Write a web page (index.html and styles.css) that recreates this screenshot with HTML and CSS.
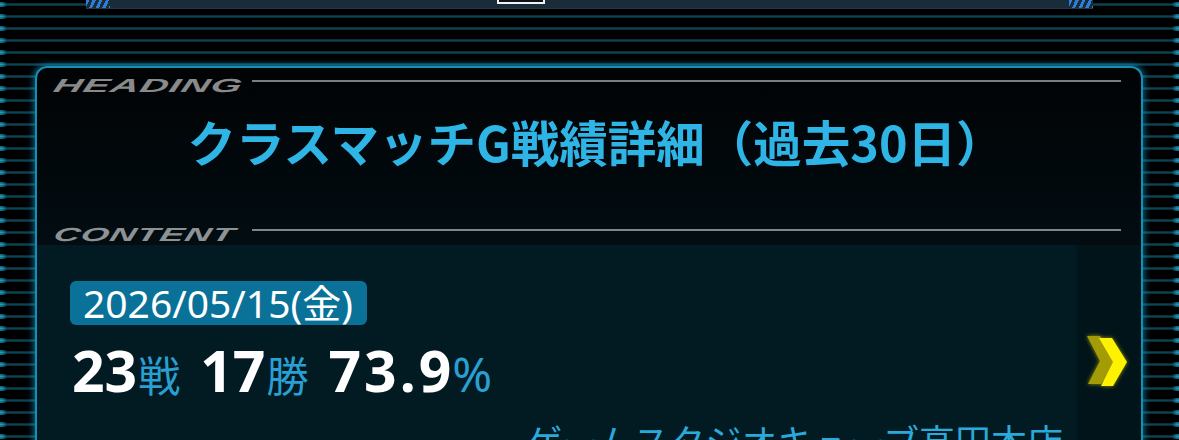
FILE: index.html
```html
<!DOCTYPE html>
<html lang="ja">
<head>
<meta charset="utf-8">
<title>クラスマッチG戦績詳細</title>
<link rel="stylesheet" href="styles.css">
</head>
<body>
<div class="page">
  <div class="topbar">
    <span class="deco"></span>
    <span class="btn-edge"></span>
    <span class="deco deco-r"></span>
  </div>
  <section class="panel">
    <div class="label-row">
      <span class="label label-heading">HEADING</span>
      <span class="rule"></span>
    </div>
    <h1 class="title">クラスマッチG戦績詳細（過去30日）</h1>
    <div class="label-row label-row-content">
      <span class="label label-content">CONTENT</span>
      <span class="rule"></span>
    </div>
    <div class="record">
      <div class="record-main">
        <span class="date">2026/05/15(金)</span>
        <div class="stats"><b class="num">23</b><span class="unit">戦</span><b class="num">17</b><span class="unit">勝</span><b class="num num-rate">73.9</b><span class="unit pct">%</span></div>
        <div class="shop">ゲームスタジオキューブ高田本店</div>
      </div>
      <div class="record-arrow">
        <svg class="chevron" width="46" height="52" viewBox="0 0 46 52">
          <polygon points="2,0 15,0 29,25 16,48 3,48 15,25" fill="#a49c06"/>
          <polygon points="14,2 27,2 42,26 28,50 16,50 28,26" fill="#fff200"/>
        </svg>
      </div>
    </div>
  </section>
</div>
</body>
</html>
```
FILE: styles.css
```css
html, body {
  margin: 0;
  padding: 0;
  background: #000;
}

.page {
  position: relative;
  width: 1179px;
  height: 440px;
  overflow: hidden;
  background:
    repeating-linear-gradient(to bottom,
      #000 0px, #000 3px,
      #05242d 3px, #0c4454 4.5px, #05242d 6px,
      #000 6px, #000 12px);
  font-family: "Noto Sans", "Noto Sans CJK JP", sans-serif;
}

.page::before,
.page::after {
  content: "";
  position: absolute;
  top: 0;
  bottom: 0;
  width: 7px;
  background:
    repeating-linear-gradient(to bottom,
      #000 0px, #000 2px,
      #0b5a70 2px, #1d98ba 4.5px, #0b5a70 7px,
      #000 7px, #000 12px);
}
.page::before {
  left: 0;
  -webkit-mask-image: linear-gradient(to right, #000 30%, transparent);
  mask-image: linear-gradient(to right, #000 30%, transparent);
}
.page::after {
  right: 0;
  -webkit-mask-image: linear-gradient(to left, #000 30%, transparent);
  mask-image: linear-gradient(to left, #000 30%, transparent);
}

.topbar {
  display: flex;
  align-items: flex-start;
  height: 8px;
  margin: 0 86px 0 86px;
  background: #1a2b3a;
  border-bottom: 1px solid #24394a;
}

.deco {
  width: 24px;
  height: 8px;
  background: repeating-linear-gradient(115deg, #2c7fd4 0 3px, transparent 3px 6px);
}

.btn-edge {
  width: 44px;
  height: 2px;
  margin-left: 387px;
  border: 2px solid #f2f2f2;
  border-top: 0;
  background: #0c1218;
}

.deco-r {
  margin-left: auto;
}

.panel {
  margin: 57px 0 0 35px;
  width: 1104px;
  border: 2px solid #1590b4;
  border-bottom: 0;
  border-radius: 12px 12px 0 0;
  box-shadow: 0 0 7px 1px rgba(20, 160, 205, 0.7);
  background: linear-gradient(to bottom, #010305 0%, #020b10 35%, #03161c 75%, #041c23 100%);
  overflow: hidden;
}

.label-row {
  display: flex;
  align-items: flex-start;
  padding: 9px 20px 0 17px;
}

.label {
  display: block;
  width: 190px;
  font-family: "Liberation Sans", Arial, sans-serif;
  font-size: 19px;
  line-height: 18px;
  font-weight: bold;
  font-style: italic;
  letter-spacing: 0.5px;
  color: #8a8a8a;
  transform-origin: left center;
  white-space: nowrap;
}

.label-heading {
  transform: scaleX(2.07) skewX(-8deg);
}

.label-content {
  transform: scaleX(1.9) skewX(-8deg);
  color: #8d9394;
}

.rule {
  flex: 1;
  height: 2px;
  margin: 3px 0 0 8px;
  background: #7d7d7d;
}

.label-row-content .rule {
  background: #7e8788;
}

.title {
  margin: 19px 0 0;
  padding-left: 14px;
  text-align: center;
  font-family: "Noto Sans CJK JP", sans-serif;
  font-weight: bold;
  font-size: 48.5px;
  line-height: 55px;
  color: #2fb4e6;
  letter-spacing: 0;
}

.label-row-content {
  padding-top: 57px;
}

.record {
  display: flex;
  margin-top: 1px;
  background: #021a21;
}

.record-main {
  flex: 1;
  display: flex;
  flex-direction: column;
  align-items: flex-start;
  padding: 36px 14px 40px 33px;
}

.date {
  display: block;
  padding: 0 14px 0 13px;
  height: 44px;
  line-height: 44px;
  border-radius: 6px;
  background: #0a7198;
  color: #fff;
  font-size: 39px;
  white-space: nowrap;
}

.stats {
  display: flex;
  align-items: baseline;
  height: 66px;
  margin-top: 12px;
  margin-left: 2px;
  white-space: nowrap;
}

.num {
  font-size: 57px;
  line-height: 66px;
  font-weight: bold;
  color: #fff;
}

.num-rate {
  letter-spacing: 3px;
  margin-right: -3px;
}

.num + .unit {
  margin-left: 1px;
}

.unit {
  font-size: 42px;
  line-height: 66px;
  color: #2a9fd2;
  margin-right: 20px;
  font-family: "Noto Sans CJK JP", sans-serif;
}

.pct {
  font-family: "Noto Sans", sans-serif;
  font-size: 48px;
  margin-right: 0;
}

.shop {
  align-self: flex-end;
  margin-top: 16px;
  font-family: "Noto Sans CJK JP", sans-serif;
  font-size: 36px;
  line-height: 42px;
  color: #2aa9da;
  white-space: nowrap;
}

.record-arrow {
  box-sizing: border-box;
  width: 64px;
  background: #011419;
  display: flex;
  justify-content: center;
  align-items: flex-start;
  padding-top: 91px;
  padding-right: 2px;
}

.chevron {
  display: block;
  filter: drop-shadow(0 0 2px rgba(255, 240, 0, 0.6));
}
```
